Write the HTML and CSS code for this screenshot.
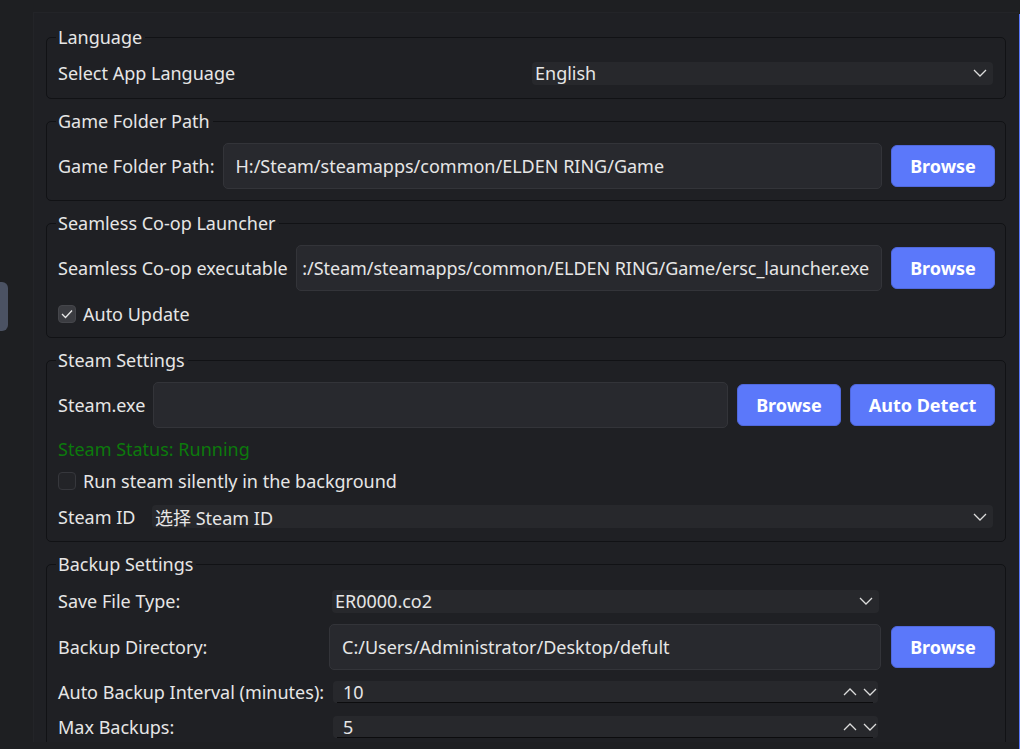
FILE: index.html
```html
<!DOCTYPE html>
<html lang="en">
<head>
<meta charset="utf-8">
<title>Settings</title>
<link rel="stylesheet" href="styles.css">
</head>
<body>
<div class="window">
  <div class="sidebar"><div class="handle"></div></div>
  <div class="scroll">
    <fieldset class="group">
      <legend>Language</legend>
      <div class="row combo-row">
        <span class="label grow">Select App Language</span>
        <div class="combo lang"><span>English</span><svg class="chev" width="14" height="8" viewBox="0 0 14 8"><path d="M1 1l6 6 6-6"/></svg></div>
      </div>
    </fieldset>

    <fieldset class="group">
      <legend>Game Folder Path</legend>
      <div class="row input-row">
        <span class="label">Game Folder Path:</span>
        <div class="input"><span>H:/Steam/steamapps/common/ELDEN RING/Game</span></div>
        <button class="btn browse">Browse</button>
      </div>
    </fieldset>

    <fieldset class="group">
      <legend>Seamless Co-op Launcher</legend>
      <div class="stack">
        <div class="row input-row">
          <span class="label">Seamless Co-op executable</span>
          <div class="input scrolled"><span>:/Steam/steamapps/common/ELDEN RING/Game/ersc_launcher.exe</span></div>
          <button class="btn browse">Browse</button>
        </div>
        <label class="row check-row">
          <span class="check on"><svg width="12" height="10" viewBox="0 0 12 10"><path d="M1 5l3.5 3.5L11 1.5"/></svg></span>
          <span class="label">Auto Update</span>
        </label>
      </div>
    </fieldset>

    <fieldset class="group">
      <legend>Steam Settings</legend>
      <div class="stack steam">
        <div class="row input-row">
          <span class="label">Steam.exe</span>
          <div class="input"><span></span></div>
          <button class="btn browse">Browse</button>
          <button class="btn detect">Auto Detect</button>
        </div>
        <div class="row status-row"><span class="status">Steam Status: Running</span></div>
        <label class="row check-row">
          <span class="check"></span>
          <span class="label">Run steam silently in the background</span>
        </label>
        <div class="row id-row">
          <span class="label id-label">Steam ID</span>
          <div class="combo grow"><span>选择 Steam ID</span><svg class="chev" width="14" height="8" viewBox="0 0 14 8"><path d="M1 1l6 6 6-6"/></svg></div>
        </div>
      </div>
    </fieldset>

    <fieldset class="group backup">
      <legend>Backup Settings</legend>
      <div class="form">
        <span class="label">Save File Type:</span>
        <div class="combo file"><span>ER0000.co2</span><svg class="chev" width="14" height="8" viewBox="0 0 14 8"><path d="M1 1l6 6 6-6"/></svg></div>
        <span></span>

        <span class="label">Backup Directory:</span>
        <div class="input dir"><span>C:/Users/Administrator/Desktop/defult</span></div>
        <button class="btn browse">Browse</button>

        <span class="label">Auto Backup Interval (minutes):</span>
        <div class="spin"><span>10</span><span class="arrows"><svg class="chev" width="14" height="8" viewBox="0 0 14 8"><path d="M1 7l6-6 6 6"/></svg><svg class="chev" width="14" height="8" viewBox="0 0 14 8"><path d="M1 1l6 6 6-6"/></svg></span></div>
        <span></span>

        <span class="label">Max Backups:</span>
        <div class="spin"><span>5</span><span class="arrows"><svg class="chev" width="14" height="8" viewBox="0 0 14 8"><path d="M1 7l6-6 6 6"/></svg><svg class="chev" width="14" height="8" viewBox="0 0 14 8"><path d="M1 1l6 6 6-6"/></svg></span></div>
        <span></span>
      </div>
    </fieldset>
  </div>
  <div class="edge"></div>
</div>
</body>
</html>
```

FILE: styles.css
```css
* { box-sizing: border-box; }

html, body {
  margin: 0;
  padding: 0;
  width: 1020px;
  height: 749px;
  overflow: hidden;
  background: #1c1d20;
}

body {
  font-family: "Noto Sans", "Noto Sans CJK SC", sans-serif;
  font-size: 18px;
  color: #e6e6e6;
}

.window {
  display: flex;
  height: 749px;
  background: #1e1f22;
}

.sidebar {
  width: 33px;
  flex: none;
  padding-top: 282px;
}

.handle {
  width: 8px;
  height: 49px;
  background: #4b5263;
  border-radius: 0 6px 6px 0;
}

.scroll {
  flex: 1;
  margin-top: 12px;
  height: 730px;
  overflow: hidden;
  background: #1f2024;
  border-top: 1px solid #232428;
  border-left: 1px solid #232428;
  padding: 13px 13px 0 12px;
  display: flex;
  flex-direction: column;
  gap: 11px;
}

.edge {
  width: 1px;
  flex: none;
  margin-top: 14px;
  background: #5b78fa;
}

.group {
  margin: 0;
  flex: none;
  border: 1px solid #111215;
  border-radius: 5px;
  padding: 11px 10px 11px 11px;
  min-width: 0;
}

.group legend {
  margin-left: -2px;
  padding: 0 3px 0 2px;
  line-height: 22px;
  font-size: 18px;
}

.group.backup { padding-top: 12px; }

.row {
  display: flex;
  align-items: center;
  gap: 8px;
}

.label { white-space: nowrap; }
.grow { flex: 1; min-width: 0; }

.stack {
  display: flex;
  flex-direction: column;
  gap: 11px;
}

.stack.steam { gap: 9px; }

.combo-row { height: 28px; }
.input-row { height: 46px; }
.check-row { height: 24px; gap: 7px; }
.steam .check-row { height: 22px; }
.status-row { height: 24px; }
.id-row { height: 27px; gap: 6px; margin-top: 2px; }

.combo {
  height: 23px;
  background: #27282c;
  border-radius: 4px;
  display: flex;
  align-items: center;
  justify-content: space-between;
  padding: 0 6px 0 3px;
  white-space: nowrap;
}

.combo.lang { width: 461px; margin-right: 2px; }
.id-label { width: 88px; }
.id-row .combo { margin-right: 2px; }

.chev {
  display: block;
  flex: none;
}
.chev path {
  fill: none;
  stroke: #dcdcdc;
  stroke-width: 1.3;
}

.input {
  flex: 1;
  min-width: 0;
  height: 46px;
  background: #28292e;
  border: 1px solid #333439;
  border-radius: 5px;
  padding: 0 12px;
  display: flex;
  align-items: center;
  overflow: hidden;
  white-space: nowrap;
}

.input.scrolled {
  justify-content: flex-end;
  padding: 0 12px 0 10px;
  letter-spacing: -0.06px;
}

.btn {
  flex: none;
  height: 42px;
  background: #5b78fa;
  border: 1px solid #5068dc;
  border-radius: 6px;
  color: #ffffff;
  font-family: "Noto Sans", sans-serif;
  font-size: 18px;
  font-weight: 700;
  padding: 0;
  margin-left: 1px;
}

.btn.browse { width: 104px; }
.btn.detect { width: 145px; }

.check {
  width: 18px;
  height: 18px;
  flex: none;
  border-radius: 4px;
  background: #232428;
  border: 1px solid #36373c;
  display: flex;
  align-items: center;
  justify-content: center;
}

.check.on {
  background: #3b3c41;
  border-color: #45464b;
}

.check path {
  fill: none;
  stroke: #e8e8e8;
  stroke-width: 1.3;
}

.status { color: #0c7a0c; }

.form {
  display: grid;
  grid-template-columns: 262px 1fr 105px;
  grid-template-rows: 28px 46px 26px 26px;
  column-gap: 9px;
  row-gap: 9px;
  align-items: center;
}

.combo.file { margin: 0 2px 0 3px; }

.spin {
  height: 22px;
  margin: 0 3px 0 4px;
  border-radius: 4px;
  background: linear-gradient(#0c0c0e, #0c0c0e) 4px 100% / calc(100% - 9px) 1px no-repeat, #27282c;
  display: flex;
  align-items: center;
  justify-content: space-between;
  padding: 0 1px 1px 10px;
}

.arrows {
  display: flex;
  gap: 6px;
  align-items: center;
}
```
